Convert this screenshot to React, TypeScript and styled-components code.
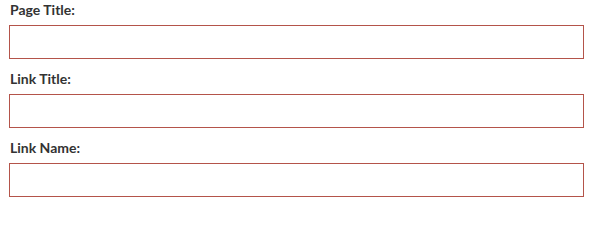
import styled, { createGlobalStyle } from 'styled-components';

const GlobalStyle = createGlobalStyle`
  body {
    margin: 0;
    background: #ffffff;
    font-family: Lato, "Open Sans", sans-serif;
  }
`;

const fields = ['Page Title:', 'Link Title:', 'Link Name:'];

export default function App() {
  return (
    <>
      <GlobalStyle />
      <Form>
        {fields.map((label) => (
          <Field key={label}>
            <Label>{label}</Label>
            <Input type="text" />
          </Field>
        ))}
      </Form>
    </>
  );
}

const Form = styled.form`
  display: flex;
  flex-direction: column;
  gap: 10px;
  padding: 0 6px 0 9px;
`;

const Field = styled.div`
  display: flex;
  flex-direction: column;
`;

const Label = styled.label`
  font-size: 14px;
  font-weight: 700;
  color: #333333;
  line-height: 20px;
  margin-bottom: 5px;
  padding-left: 1px;
`;

const Input = styled.input`
  appearance: none;
  box-sizing: border-box;
  width: 575px;
  height: 34px;
  margin: 0;
  border: 1px solid #b4544a;
  border-radius: 0;
  background: #ffffff;
  outline: none;
`;
